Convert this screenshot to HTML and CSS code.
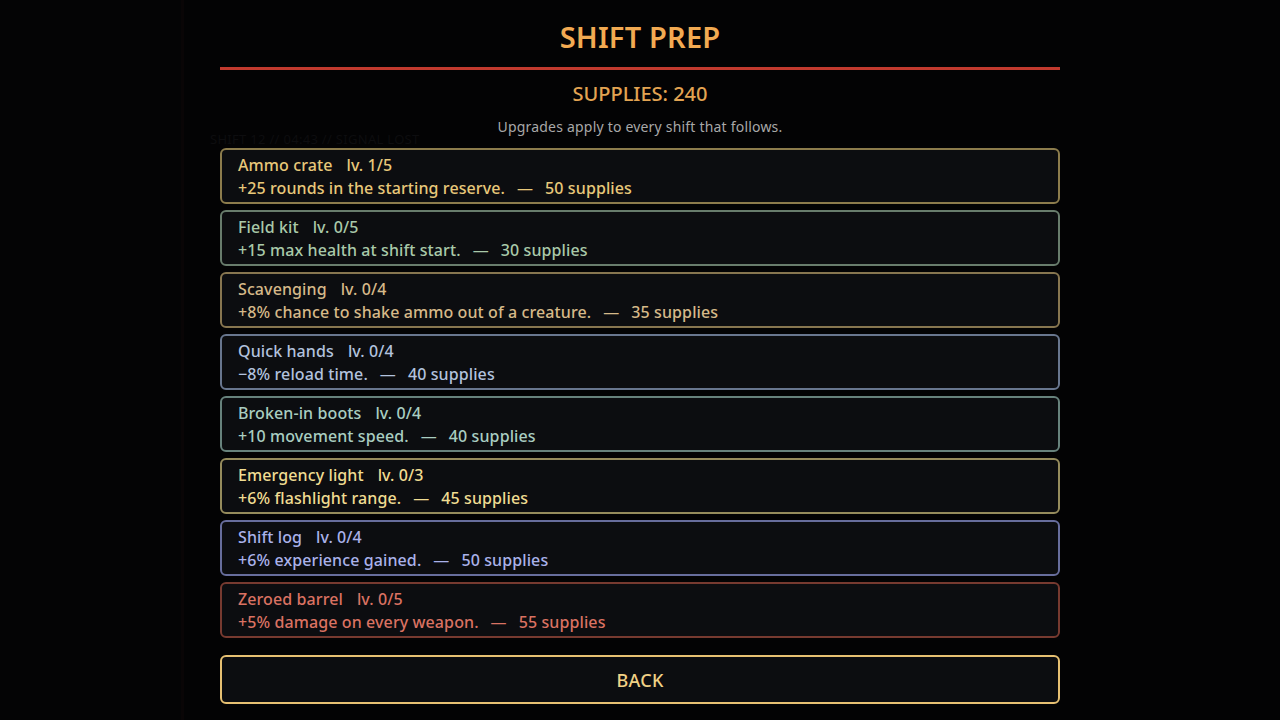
FILE: index.html
```html
<!DOCTYPE html>
<html>
<head>
<meta charset="utf-8">
<link rel="stylesheet" href="styles.css">
</head>
<body>
<div class="scene">
  <div class="bg-side"></div>
  <div class="bg-hud">SHIFT 12 // 04:43 // SIGNAL LOST</div>
  <main class="panel">
    <h1 class="title">SHIFT PREP</h1>
    <div class="rule"></div>
    <div class="supplies">SUPPLIES: 240</div>
    <p class="note">Upgrades apply to every shift that follows.</p>
    <div class="list">
      <div class="card c-ammo"><div class="name">Ammo crate<span class="lv">lv. 1/5</span></div><div class="desc">+25 rounds in the starting reserve.<span class="dash">—</span>50 supplies</div></div>
      <div class="card c-kit"><div class="name">Field kit<span class="lv">lv. 0/5</span></div><div class="desc">+15 max health at shift start.<span class="dash">—</span>30 supplies</div></div>
      <div class="card c-scav"><div class="name">Scavenging<span class="lv">lv. 0/4</span></div><div class="desc">+8% chance to shake ammo out of a creature.<span class="dash">—</span>35 supplies</div></div>
      <div class="card c-quick"><div class="name">Quick hands<span class="lv">lv. 0/4</span></div><div class="desc">−8% reload time.<span class="dash">—</span>40 supplies</div></div>
      <div class="card c-boots"><div class="name">Broken-in boots<span class="lv">lv. 0/4</span></div><div class="desc">+10 movement speed.<span class="dash">—</span>40 supplies</div></div>
      <div class="card c-light"><div class="name">Emergency light<span class="lv">lv. 0/3</span></div><div class="desc">+6% flashlight range.<span class="dash">—</span>45 supplies</div></div>
      <div class="card c-log"><div class="name">Shift log<span class="lv">lv. 0/4</span></div><div class="desc">+6% experience gained.<span class="dash">—</span>50 supplies</div></div>
      <div class="card c-barrel"><div class="name">Zeroed barrel<span class="lv">lv. 0/5</span></div><div class="desc">+5% damage on every weapon.<span class="dash">—</span>55 supplies</div></div>
    </div>
    <button class="back">BACK</button>
  </main>
</div>
</body>
</html>
```

FILE: styles.css
```css
* { box-sizing: border-box; }
html, body {
  margin: 0;
  padding: 0;
  width: 1280px;
  height: 720px;
  overflow: hidden;
  background: #030304;
  font-family: "Noto Sans", "Open Sans", sans-serif;
}
.scene {
  position: relative;
  width: 1280px;
  height: 720px;
  background: #030304;
}
.bg-side {
  position: absolute;
  left: 0;
  top: 0;
  width: 184px;
  height: 720px;
  background: #040405;
  border-right: 3px solid #090506;
}
.bg-hud {
  position: absolute;
  left: 210px;
  top: 130px;
  font-size: 13px;
  color: #0d0d0f;
  letter-spacing: 0.3px;
}
.panel {
  position: relative;
  width: 840px;
  margin: 0 auto;
  padding-top: 17px;
  display: flex;
  flex-direction: column;
  align-items: stretch;
}
.title {
  margin: 0;
  font-size: 29px;
  line-height: 40px;
  font-weight: 600;
  color: #f2aa52;
  text-align: center;
  letter-spacing: 0.2px;
}
.rule {
  margin-top: 10px;
  height: 3px;
  background: #c23a2e;
}
.supplies {
  margin-top: 10px;
  font-size: 20px;
  line-height: 28px;
  font-weight: 500;
  color: #e2a452;
  text-align: center;
}
.note {
  margin: 9px 0 0;
  font-size: 14px;
  line-height: 20px;
  color: #a8a8a8;
  text-align: center;
  letter-spacing: 0.2px;
}
.list {
  margin-top: 11px;
  display: flex;
  flex-direction: column;
  gap: 6px;
}
.card {
  height: 56px;
  border: 2px solid;
  border-radius: 6px;
  background: #0c0d10;
  padding: 4px 16px 2px;
  font-size: 16px;
  line-height: 23px;
  font-weight: 500;
  letter-spacing: 0.1px;
}
.lv { margin-left: 14px; }
.dash { margin: 0 12px; }
.c-ammo { border-color: #8c7c4c; color: #e8c87a; }
.c-kit { border-color: #687c6c; color: #a9c9a9; }
.c-scav { border-color: #877650; color: #d6b989; }
.c-quick { border-color: #68768e; color: #b2c2de; }
.c-boots { border-color: #67827c; color: #a9cdc1; }
.c-light { border-color: #958b5c; color: #f0dc92; }
.c-log { border-color: #676d9c; color: #aab2ea; }
.c-barrel { border-color: #773a30; color: #da7262; }
.back {
  margin-top: 17px;
  height: 49px;
  border: 2px solid #e6c072;
  border-radius: 6px;
  background: #0c0d10;
  color: #f2d286;
  font-family: "Noto Sans", "Open Sans", sans-serif;
  font-size: 18px;
  font-weight: 500;
  letter-spacing: 0.3px;
}
```
